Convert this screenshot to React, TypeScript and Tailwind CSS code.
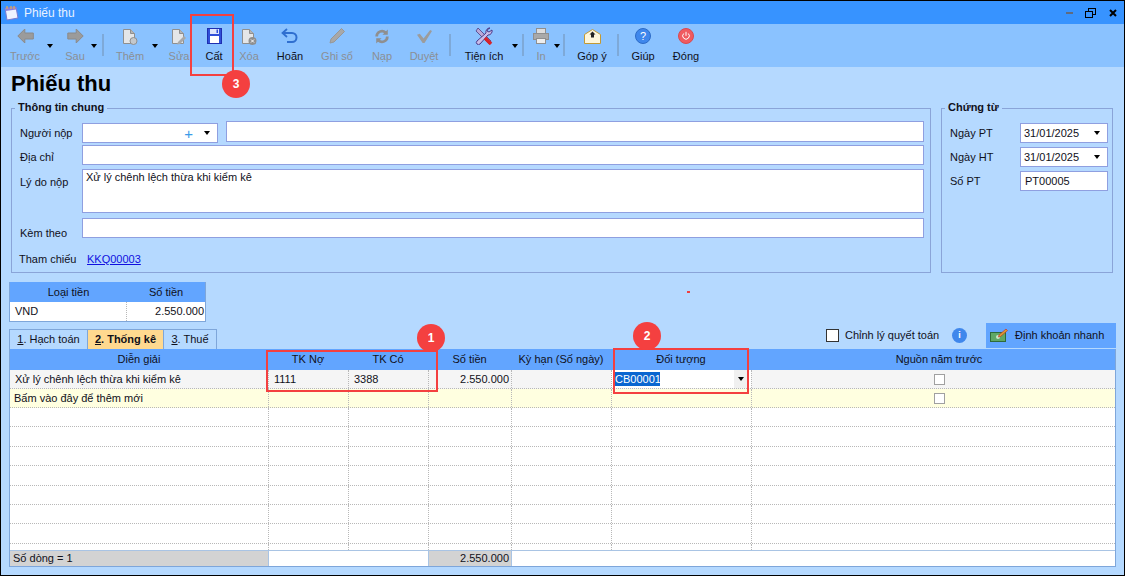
const FONT = "font-['Liberation_Sans',Arial,sans-serif]";

type Tool = {
  label: string;
  box: string;
  icon: React.ReactNode;
  off?: boolean;
  caret?: string;
};
type Sep = { sep: string };

const Doc = ({ children }: { children?: React.ReactNode }) => (
  <svg width="16" height="17" viewBox="0 0 16 17">
    <path d="M1.500 1.500h7l4 4v10h-11z" fill="#e4e6e8" stroke="#8f8f8f" />
    <path d="M8.500 1.500v4h4" fill="#b5b5b5" stroke="#8f8f8f" />
    {children}
  </svg>
);

const ArrowLeft = () => (
  <svg width="17" height="16" viewBox="0 0 17 16">
    <path d="M0.800 8l7-7v4h8.500v6H7.800v4z" fill="#9b9b9b" stroke="#8a8a8a" />
  </svg>
);
const ArrowRight = () => (
  <svg width="17" height="16" viewBox="0 0 17 16">
    <path d="M16.200 8l-7-7v4H0.800v6h8.400v4z" fill="#9b9b9b" stroke="#8a8a8a" />
  </svg>
);

const tools: (Tool | Sep)[] = [
  { label: "Trước", box: "w-[48px]", icon: <ArrowLeft />, off: true, caret: "-right-[4px]" },
  { label: "Sau", box: "w-[48px] ml-[2px]", icon: <ArrowRight />, off: true, caret: "right-[2px]" },
  { sep: "ml-[3px]" },
  {
    label: "Thêm",
    box: "w-[48px] ml-[2px]",
    off: true,
    caret: "-right-[4px]",
    icon: (
      <Doc>
        <circle cx="11.500" cy="13" r="3.500" fill="#c4c8cc" stroke="#8f8f8f" />
      </Doc>
    ),
  },
  {
    label: "Sửa",
    box: "w-[34px] ml-[8px]",
    off: true,
    icon: (
      <Doc>
        <path d="M7 14l6-6 2 2-6 6-3 .5z" fill="#a8a8a8" />
      </Doc>
    ),
  },
  {
    label: "Cất",
    box: "w-[36px]",
    icon: (
      <svg width="15" height="16" viewBox="0 0 15 16">
        <rect x="0.500" y="0.500" width="14" height="15" fill="#2f4fd8" stroke="#1f2fb0" />
        <rect x="3" y="1" width="9" height="5" fill="#dfe6fb" />
        <rect x="9.500" y="1.500" width="1.500" height="3.500" fill="#2f4fd8" />
        <rect x="3" y="8" width="9" height="7" fill="#fff" />
      </svg>
    ),
  },
  {
    label: "Xóa",
    box: "w-[34px]",
    off: true,
    icon: (
      <Doc>
        <circle cx="11.500" cy="13" r="4" fill="#8f8f8f" />
        <path d="M10 11.500l3 3m0-3l-3 3" stroke="#fff" />
      </Doc>
    ),
  },
  {
    label: "Hoãn",
    box: "w-[48px]",
    icon: (
      <svg width="18" height="16" viewBox="0 0 18 16">
        <path d="M6 1L1.500 5 6 9" fill="none" stroke="#2f6fd0" strokeWidth="1.800" />
        <path d="M2 5h9a4.500 4.500 0 010 9H6" fill="none" stroke="#2f6fd0" strokeWidth="2" />
      </svg>
    ),
  },
  {
    label: "Ghi sổ",
    box: "w-[46px]",
    off: true,
    icon: (
      <svg width="18" height="18" viewBox="0 0 18 18">
        <path d="M13.500 1.500l3 3L6 15l-4 1 1-4z" fill="#a8a8a8" stroke="#979797" />
      </svg>
    ),
  },
  {
    label: "Nạp",
    box: "w-[44px]",
    off: true,
    icon: (
      <svg width="16" height="17" viewBox="0 0 18 18">
        <path d="M3 9a6 6 0 0110-4.500M15 9a6 6 0 01-10 4.500" fill="none" stroke="#8f8f8f" strokeWidth="3" />
        <path d="M15.500 1v6h-6zM2.500 17v-6h6z" fill="#8f8f8f" />
      </svg>
    ),
  },
  {
    label: "Duyệt",
    box: "w-[40px]",
    off: true,
    icon: (
      <svg width="17" height="15" viewBox="0 0 18 16">
        <path d="M1 6l3-1 4 5 7-9 2 1-8 13h-2z" fill="#9c9c9c" />
      </svg>
    ),
  },
  { sep: "ml-[5px]" },
  {
    label: "Tiện ích",
    box: "w-[56px] ml-[5px]",
    caret: "-right-[6px]",
    icon: (
      <svg width="18" height="18" viewBox="0 0 18 18">
        <path d="M3 1l13 13-2 3L1 4z" fill="#b9a8d8" stroke="#4a3a80" strokeWidth="0.800" />
        <path d="M15 1a4 4 0 00-4 5L2 14a2 2 0 003 3l8-9a4 4 0 004-5l-3 2-2-1 1-2z" fill="#c9bce8" stroke="#4b3a8a" />
        <path d="M10 11l6 6" stroke="#d8232a" strokeWidth="3.500" />
      </svg>
    ),
  },
  { sep: "ml-[10px]" },
  {
    label: "In",
    box: "w-[26px] ml-[4px]",
    off: true,
    caret: "-right-[6px]",
    icon: (
      <svg width="16" height="16" viewBox="0 0 16 16">
        <rect x="3.500" y="0.500" width="9" height="5" fill="#ddd" stroke="#8f8f8f" />
        <rect x="0.500" y="5.500" width="15" height="6" fill="#a9a9a9" stroke="#8f8f8f" />
        <rect x="3.500" y="10.500" width="9" height="5" fill="#eee" stroke="#8f8f8f" />
      </svg>
    ),
  },
  { sep: "ml-[9px]" },
  {
    label: "Góp ý",
    box: "w-[44px] ml-[5px]",
    icon: (
      <svg width="17" height="15" viewBox="0 0 17 15">
        <path d="M0.500 5.500L8.500 0.500l8 5v9h-16z" fill="#fdf6dc" stroke="#c29a35" />
        <path d="M8.500 2.500l3 3H10v3H7v-3H5.500z" fill="#222" />
      </svg>
    ),
  },
  { sep: "ml-[3px]" },
  {
    label: "Giúp",
    box: "w-[42px] ml-[3px]",
    icon: (
      <svg width="16" height="16" viewBox="0 0 16 16">
        <circle cx="8" cy="8" r="7.500" fill="#3f87ec" stroke="#2d6bc6" />
        <text x="8" y="12" textAnchor="middle" fontSize="11" fill="#fff" fontFamily="Liberation Sans">?</text>
      </svg>
    ),
  },
  {
    label: "Đóng",
    box: "w-[44px]",
    icon: (
      <svg width="16" height="16" viewBox="0 0 16 16">
        <circle cx="8" cy="8" r="7.500" fill="#f05a60" stroke="#d84a50" />
        <path d="M5.700 5.500a3.300 3.300 0 104.600 0" fill="none" stroke="#fff" />
        <path d="M8 3.800v4" stroke="#fff" />
      </svg>
    ),
  },
];

const Caret = ({ className }: { className?: string }) => (
  <span className={`inline-block w-0 h-0 border-x-[3.5px] border-x-transparent border-t-[4px] border-t-black ${className ?? ""}`} />
);

function Badge({ n, className }: { n: number; className: string }) {
  return (
    <div className={`absolute w-[28px] h-[28px] rounded-full bg-[#f44040] text-white text-[12px] font-bold flex items-center justify-center ${className}`}>
      {n}
    </div>
  );
}

const inputCls = "h-full bg-white border border-[#8f9fe0]";
const gridCols = "grid grid-cols-[258px_80px_80px_83px_100px_140px_1fr]";
const cell = "h-full border-l border-dotted border-[#b8b8b8]";
const emptyRows = Array.from({ length: 8 });

export default function App() {
  return (
    <div className={`relative w-[1125px] h-[576px] overflow-hidden bg-[#b5d9ff] border border-black flex flex-col text-[11px] leading-none text-[#10101a] ${FONT}`}>
      {/* Title bar */}
      <div className="h-[23px] bg-[#3793ff] flex items-center shrink-0">
        <svg width="16" height="16" viewBox="0 0 16 16" className="ml-[2px]">
          <path d="M2 3l11-1 2 11-11 2z" fill="#eef3ff" stroke="#7a7ad0" />
          <path d="M2 3l11-1 .4 2.500L2.500 6z" fill="#8c7fd8" />
          <path d="M4 1v3M8 1v3M11 1v3" stroke="#e0b050" strokeWidth="1.200" />
        </svg>
        <span className="ml-[5px] text-[#e8f2ff] text-[12px]">Phiếu thu</span>
        <div className="ml-auto flex items-center pr-[5px]">
          <span className="w-[7px] h-[2px] bg-[#5f6b80] mr-[12px]" />
          <svg width="11" height="10" viewBox="0 0 11 10" className="mr-[13px]">
            <rect x="3.500" y="0.500" width="7" height="6" fill="none" stroke="#000" />
            <rect x="0.500" y="3.500" width="7" height="6" fill="#3793ff" stroke="#000" />
          </svg>
          <svg width="8" height="8" viewBox="0 0 8 8" className="mr-[2px]">
            <path d="M1 1l6 6M7 1L1 7" stroke="#000" strokeWidth="2" />
          </svg>
        </div>
      </div>

      {/* Toolbar */}
      <div className="h-[43px] bg-[#8ac2ff] flex shrink-0">
        {tools.map((t, i) =>
          "sep" in t ? (
            <div key={i} className={`w-[2px] h-[22px] mt-[10px] bg-[#7ea9d8] shrink-0 ${t.sep}`} />
          ) : (
            <div key={t.label} className={`relative shrink-0 flex flex-col items-center pt-[3px] ${t.box}`}>
              <div className="h-[18px] flex items-center">{t.icon}</div>
              <span className={`mt-[6px] whitespace-nowrap ${t.off ? "text-[#8b8f95]" : "text-[#10101a]"}`}>{t.label}</span>
              {t.caret && (
                <Caret className={`absolute top-[20px] ${t.caret} ${t.off ? "border-t-[#555]" : ""}`} />
              )}
            </div>
          ),
        )}
      </div>

      {/* Body */}
      <div className="flex-1 flex flex-col px-[8px] min-h-0">
        <h1 className="h-[29px] pt-[5px] pl-[2px] text-[22px] leading-[24px] font-bold text-black">Phiếu thu</h1>

        <div className="flex gap-[10px] pl-[2px] pr-[3px] mt-[12px] h-[165px]">
          <fieldset className="w-[920px] border border-[#8aa4d8] relative pl-[8px] pr-[6px] pt-[12px]">
            <span className="absolute -top-[7px] left-[3px] px-[3px] bg-[#b5d9ff] font-bold">Thông tin chung</span>
            <div className="flex h-[22px]">
              <label className="w-[62px] pt-[7px]">Người nộp</label>
              <div className={`${inputCls} w-[136px] !h-[20px] mt-[2px] flex items-center justify-end pr-[7px]`}>
                <span className="text-[#3b9be8] text-[15px] mr-[11px]">+</span>
                <Caret />
              </div>
              <div className={`${inputCls} flex-1 !h-[21px] ml-[8px]`} />
            </div>
            <div className="flex items-center h-[20px] mt-[2px]">
              <label className="w-[62px] pt-[4px]">Địa chỉ</label>
              <div className={`${inputCls} flex-1`} />
            </div>
            <div className="flex h-[44px] mt-[4px]">
              <label className="w-[62px] pt-[8px]">Lý do nộp</label>
              <div className={`${inputCls} flex-1 px-[3px] pt-[2px]`}>Xử lý chênh lệch thừa khi kiểm kê</div>
            </div>
            <div className="flex h-[20px] mt-[5px]">
              <label className="w-[62px] pt-[10px]">Kèm theo</label>
              <div className={`${inputCls} flex-1`} />
            </div>
            <div className="flex items-center mt-[16px] -ml-[1px]">
              <label className="w-[68px]">Tham chiếu</label>
              <a className="text-[#1010e0] underline">KKQ00003</a>
            </div>
          </fieldset>

          <fieldset className="w-[172px] border border-[#8aa4d8] relative pl-[8px] pt-[14px]">
            <span className="absolute -top-[7px] left-[3px] px-[3px] bg-[#b5d9ff] font-bold">Chứng từ</span>
            {["Ngày PT", "Ngày HT"].map((l) => (
              <div key={l} className="flex items-center h-[20px] mb-[4px]">
                <label className="w-[70px] pt-[1px]">{l}</label>
                <div className={`${inputCls} w-[88px] flex items-center justify-between px-[3px]`}>
                  31/01/2025
                  <Caret className="mr-[4px]" />
                </div>
              </div>
            ))}
            <div className="flex items-center h-[20px]">
              <label className="w-[70px]">Số PT</label>
              <div className={`${inputCls} w-[88px] flex items-center px-[4px]`}>PT00005</div>
            </div>
          </fieldset>
        </div>

        {/* Currency grid */}
        <div className="relative w-[197px] mt-[9px] border-x border-b border-[#7ea6da]">
          <div className="grid grid-cols-[117px_1fr] h-[20px] bg-[#62a5ff] text-center items-center">
            <span>Loại tiền</span>
            <span>Số tiền</span>
          </div>
          <div className="grid grid-cols-[117px_1fr] h-[19px] bg-white items-center">
            <span className="pl-[5px] border-r border-dotted border-[#b8b8b8] h-full leading-[18px]">VND</span>
            <span className="text-right pr-[1px]">2.550.000</span>
          </div>
          <span className="absolute left-[677px] top-[9px] w-[3px] h-[2px] bg-[#f04040]" />
        </div>

        {/* Tabs + actions */}
        <div className="flex items-end h-[27px]">
          <div className="flex h-[20px] border-l border-t border-[#7ea6da]">
            <div className="w-[78px] flex items-center justify-center border-r border-[#7ea6da]">
              <span>
                <u>1</u>. Hạch toán
              </span>
            </div>
            <div className="w-[75px] flex items-center justify-center bg-[#ffd98f] font-bold">
              <span>
                <u>2</u>. Thống kê
              </span>
            </div>
            <div className="w-[54px] flex items-center justify-center border-x border-[#7ea6da]">
              <span>
                <u>3</u>. Thuế
              </span>
            </div>
          </div>
          <div className="ml-auto flex items-center h-[26px] mb-[1px]">
            <span className="w-[13px] h-[13px] bg-white border border-[#333] shrink-0" />
            <span className="ml-[6px] w-[95px] whitespace-nowrap">Chỉnh lý quyết toán</span>
            <span className="ml-[12px] w-[15px] h-[15px] rounded-full bg-[#3f87ec] text-white text-[9px] font-bold flex items-center justify-center shrink-0">i</span>
            <div className="ml-[19px] w-[130px] h-[25px] bg-[#62a5ff] flex items-center pl-[4px] shrink-0">
              <svg width="18" height="14" viewBox="0 0 18 14">
                <rect x="0.500" y="4.500" width="15" height="9" fill="#5fa866" stroke="#2e6b3a" />
                <circle cx="8" cy="9" r="2" fill="#c8e8c8" />
                <path d="M9 7l7-6 1.500 1.500-7 6-2 .5z" fill="#e0a030" stroke="#c03030" strokeWidth="0.700" />
              </svg>
              <span className="ml-[7px] whitespace-nowrap">Định khoản nhanh</span>
            </div>
          </div>
        </div>

        {/* Detail grid */}
        <div className="w-[1107px] h-[218px] flex flex-col border-x border-b border-[#7ea6da] bg-white overflow-hidden">
          <div className={`${gridCols} h-[21px] bg-[#62a5ff] text-center items-center shrink-0`}>
            {["Diễn giải", "TK Nợ", "TK Có", "Số tiền", "Kỳ hạn (Số ngày)", "Đối tượng"].map((h) => (
              <span key={h} className="whitespace-nowrap">{h}</span>
            ))}
            <span className="whitespace-nowrap pl-[12px]">Nguồn năm trước</span>
          </div>

          <div className={`${gridCols} h-[19px] bg-[#f5f5f5] items-center shrink-0 border-b border-dotted border-[#b8b8b8]`}>
            <span className="pl-[5px]">Xử lý chênh lệch thừa khi kiểm kê</span>
            <span className={`pl-[5px] leading-[18px] ${cell}`}>1111</span>
            <span className={`pl-[5px] leading-[18px] ${cell}`}>3388</span>
            <span className={`text-right pr-[2px] leading-[18px] ${cell}`}>2.550.000</span>
            <span className={cell} />
            <div className={`bg-white flex items-center pl-[3px] relative ${cell}`}>
              <span className="bg-[#0a66d0] text-white w-[45px] h-[14px] leading-[14px]">CB00001</span>
              <span className="absolute right-[4px] top-0 h-full w-[13px] bg-[#f0f0f0] flex items-center justify-center">
                <Caret />
              </span>
            </div>
            <div className={`flex items-center justify-center pl-[12px] ${cell}`}>
              <span className="w-[11px] h-[11px] bg-white border border-[#a0a0a0]" />
            </div>
          </div>

          <div className={`${gridCols} h-[19px] bg-[#ffffe0] items-center shrink-0 border-b border-dotted border-[#b8b8b8]`}>
            <span className="pl-[4px]">Bấm vào đây để thêm mới</span>
            {[0, 1, 2, 3, 4].map((c) => (
              <span key={c} className={cell} />
            ))}
            <div className={`flex items-center justify-center pl-[12px] ${cell}`}>
              <span className="w-[11px] h-[11px] bg-white border border-[#a0a0a0]" />
            </div>
          </div>

          <div className="flex-1 min-h-0 overflow-hidden">
            {emptyRows.map((_, r) => (
              <div key={r} className={`${gridCols} h-[19.4px] border-b border-dotted border-[#b8b8b8]`}>
                <span />
                {[0, 1, 2, 3, 4, 5].map((c) => (
                  <span key={c} className={cell} />
                ))}
              </div>
            ))}
          </div>

          <div className={`${gridCols} h-[16px] shrink-0 items-center border-t border-[#a9c4e4]`}>
            <span className="bg-[#d3d3d3] h-full pl-[3px] leading-[15px]">Số dòng = 1</span>
            <span className="col-span-2 h-full border-l border-[#a9c4e4]" />
            <span className="bg-[#d3d3d3] h-full text-right pr-[2px] leading-[15px] border-l border-[#a9c4e4]">2.550.000</span>
            <span className="col-span-3 h-full border-l border-[#a9c4e4]" />
          </div>
        </div>
      </div>

      {/* Red callouts */}
      <div className="absolute left-[189px] top-[13px] w-[44px] h-[62px] border-2 border-[#f44040]" />
      <Badge n={3} className="left-[221px] top-[69px]" />
      <div className="absolute left-[265px] top-[349px] w-[172px] h-[42px] border-2 border-[#f44040]" />
      <Badge n={1} className="left-[416px] top-[323px]" />
      <div className="absolute left-[612px] top-[347px] w-[136px] h-[46px] border-2 border-[#f44040]" />
      <Badge n={2} className="left-[632px] top-[321px]" />
    </div>
  );
}
